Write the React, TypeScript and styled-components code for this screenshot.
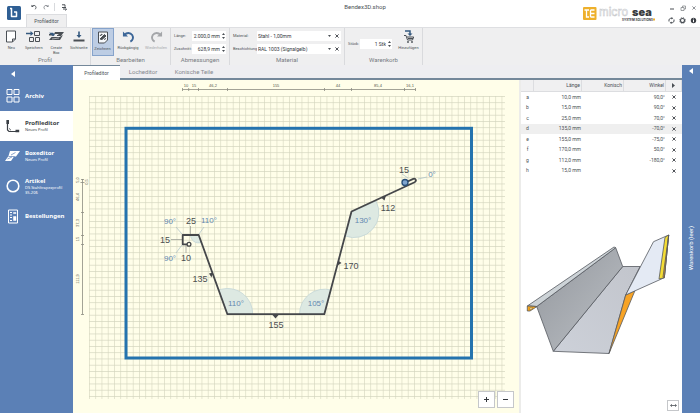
import React from "react";
import styled, { createGlobalStyle } from "styled-components";

const blue = "#5b80b6";
const ink = "#4a4f55";
const navy = "#35597f";

const GlobalStyle = createGlobalStyle`
  *, *::before, *::after { box-sizing: border-box; }
  body { margin: 0; background: #fff; color: ${ink}; font: 5px/6px Roboto, "Noto Sans", sans-serif; }
  button, input, select { font: inherit; color: inherit; margin: 0; padding: 0; border: 0; background: none; }
  svg { display: block; }
`;

const Page = styled.div`
  min-height: 100vh;
  display: flex;
  flex-direction: column;
`;

/* Title bar */
const TitleBar = styled.header`
  display: flex;
  height: 27px;
`;
const AppLogo = styled.div`
  width: 26px;
  padding: 6px 0 0 7px;
`;
const TitleLeft = styled.div`
  width: 121px;
  display: flex;
  flex-direction: column;
  justify-content: space-between;
`;
const QuickBar = styled.div`
  display: flex;
  align-items: center;
  gap: 5px;
  padding: 3px 0 0 4px;
`;
const QuickDivider = styled.span`
  width: 1px;
  height: 8px;
  background: #d8dadd;
`;
const IconButton = styled.button`
  display: grid;
  place-items: center;
  width: 7px;
  height: 7px;
`;
const RibbonTab = styled.button`
  width: 41px;
  height: 13px;
  background: #efeff0;
  border: 1px solid #dcdde0;
  border-bottom: 0;
  align-self: flex-start;
`;
const AppTitle = styled.h1`
  flex: 1;
  margin: 0;
  padding-top: 3px;
  text-align: center;
  font-size: 6px;
  line-height: 8px;
  font-weight: 400;
`;
const Brand = styled.div`
  width: 74px;
  padding-top: 6px;
`;
const WindowTools = styled.div`
  width: 43px;
  display: grid;
  grid-template-columns: repeat(3, 7px);
  column-gap: 4px;
  row-gap: 6px;
  align-content: start;
  justify-content: end;
  padding: 4px 3px 0 0;
`;

/* Ribbon */
const Ribbon = styled.div`
  display: flex;
  height: 38px;
  background: #efeff0;
  border-top: 1px solid #dedfe2;
`;
const Group = styled.section<{ $width: number }>`
  width: ${(p) => p.$width}px;
  display: flex;
  flex-direction: column;
  justify-content: space-between;
  border-right: 1px solid #d9dadd;
`;
const GroupBody = styled.div<{ $center?: boolean }>`
  display: flex;
  justify-content: space-around;
  align-items: ${(p) => (p.$center ? "center" : "flex-start")};
  height: 28px;
`;
const GroupLabel = styled.div`
  text-align: center;
  font-size: 6px;
  height: 9px;
  line-height: 8px;
  color: #777b82;
`;
const Tool = styled.button<{ $active?: boolean; $muted?: boolean; $wide?: boolean }>`
  width: ${(p) => (p.$wide ? 27 : 22)}px;
  height: 28px;
  display: flex;
  flex-direction: column;
  align-items: center;
  padding-top: 2px;
  gap: 2px;
  font-size: 4px;
  line-height: 5px;
  background: ${(p) => (p.$active ? "#bdcde4" : "transparent")};
  border: ${(p) => (p.$active ? "1px solid #86a3cb" : "0")};
  opacity: ${(p) => (p.$muted ? 0.45 : 1)};
`;
const Fields = styled.div`
  flex: 1;
  display: grid;
  align-content: start;
  gap: 3px;
  padding: 3px 3px 0;
`;
const FieldRow = styled.div`
  display: flex;
  align-items: center;
`;
const FieldLabel = styled.label<{ $width: number }>`
  width: ${(p) => p.$width}px;
  font-size: 4px;
  white-space: nowrap;
`;
const FieldBox = styled.div`
  flex: 1;
  height: 10px;
  min-width: 0;
  display: flex;
  align-items: center;
  gap: 2px;
  padding: 0 1px;
  background: #fff;
  color: #33373c;
`;
const NumberInput = styled.input`
  flex: 1;
  width: 0;
  min-width: 0;
  text-align: right;
`;
const Picker = styled.select`
  flex: 1;
  min-width: 0;
  appearance: none;
`;
const Spinner = styled.span`
  display: grid;
  gap: 2px;
`;
const SpinButton = styled.button`
  display: block;
  width: 3px;
  height: 2px;
`;

/* Main area */
const Main = styled.div`
  flex: 1;
  display: flex;
`;
const Sidebar = styled.nav`
  width: 73px;
  background: ${blue};
  color: #fff;
`;
const Collapse = styled.button`
  display: block;
  height: 16px;
  padding: 2px 0 0 11px;
`;
const NavItem = styled.button<{ $active?: boolean }>`
  width: 100%;
  height: 30px;
  display: flex;
  align-items: center;
  gap: 5px;
  padding-left: 5px;
  text-align: left;
  background: ${(p) => (p.$active ? "#fff" : "transparent")};
  color: ${(p) => (p.$active ? "#3b3f45" : "#fff")};
`;
const NavText = styled.span`
  display: flex;
  flex-direction: column;
  font-size: 4px;
  line-height: 5px;
  font-family: "Noto Sans", sans-serif;
  white-space: nowrap;
`;
const NavTitle = styled.strong`
  font-size: 6px;
  line-height: 7px;
`;
const Center = styled.div`
  flex: 1;
  min-width: 0;
  display: flex;
  flex-direction: column;
`;
const TabBar = styled.div`
  display: flex;
  height: 15px;
  background: #eeeef1;
  border-bottom: 2px solid #74889a;
`;
const Tab = styled.button<{ $active?: boolean; $width: number }>`
  width: ${(p) => p.$width}px;
  height: ${(p) => (p.$active ? 15 : 13)}px;
  font-size: ${(p) => (p.$active ? 5 : 6)}px;
  background: ${(p) => (p.$active ? "#fff" : "transparent")};
  border-top: ${(p) => (p.$active ? "1px solid #74889a" : "0")};
  color: ${(p) => (p.$active ? ink : "#85888d")};
`;
const Split = styled.div`
  flex: 1;
  display: flex;
`;
const Canvas = styled.div`
  flex: 1;
  min-width: 0;
  position: relative;
  background: #fffee9;
  border-right: 2px solid #ececea;
`;
const Drawing = styled.svg`
  width: 100%;
  height: auto;
  font-family: "Liberation Sans", Arial, sans-serif;
`;
const ZoomButtons = styled.div`
  position: absolute;
  right: 5px;
  bottom: 5px;
  display: flex;
  gap: 2px;
`;
const ZoomButton = styled.button`
  width: 17px;
  height: 17px;
  display: grid;
  place-items: center;
  background: #fff;
  border: 1px solid #c5c7ca;
`;
const SidePanel = styled.aside`
  width: 161px;
  display: flex;
  flex-direction: column;
  background: #fff;
`;
const Segments = styled.table`
  width: 100%;
  height: 96px;
  table-layout: fixed;
  border-collapse: separate;
  border-spacing: 0;
  line-height: 5px;
`;
const Head = styled.th<{ $width: number }>`
  width: ${(p) => p.$width}px;
  height: 12px;
  padding: 0 1px;
  font-weight: 400;
  text-align: right;
  background: #f0f0f1;
  border-right: 1px solid #dcdde0;
  border-bottom: 1px solid #dcdde0;
`;
const SegmentRow = styled.tr<{ $active?: boolean }>`
  background: ${(p) => (p.$active ? "#efefef" : "transparent")};
`;
const Cell = styled.td<{ $center?: boolean }>`
  padding: 0 1px;
  text-align: ${(p) => (p.$center ? "center" : "right")};
`;
const DeleteButton = styled.button`
  display: block;
  margin: 0 auto;
`;
const Preview = styled.div`
  flex: 1;
  display: flex;
  flex-direction: column;
  justify-content: space-between;
  padding: 56px 0 2px;
`;
const FitButton = styled.button`
  align-self: flex-end;
  width: 12px;
  height: 11px;
  margin-right: 3px;
  display: grid;
  place-items: center;
  border: 1px solid #c5c7ca;
`;
const CartStrip = styled.aside`
  width: 18px;
  background: ${blue};
  color: #fff;
  display: flex;
  flex-direction: column;
  align-items: center;
  gap: 152px;
`;
const StripToggle = styled.button`
  padding-top: 3px;
`;
const CartLabel = styled.span`
  writing-mode: vertical-rl;
  transform: rotate(180deg);
  font-size: 6px;
  line-height: 8px;
`;

const Undo = ({ size = 7, color = ink, flip = false, weight = 2 }) => (
  <svg width={size} height={size} viewBox="0 0 14 14" fill="none" stroke={color} strokeWidth={weight}>
    <g transform={flip ? "translate(14 0) scale(-1 1)" : undefined}>
      <path d="M2.500 5.500C5 2.500 9 2.500 11 5.500c1.600 2.600.8 5.300-2 7" />
      <path d="M1 1.500v5.500h5.500z" fill={color} stroke="none" />
    </g>
  </svg>
);
const Cross = () => (
  <svg width="4" height="4" viewBox="0 0 4 4" stroke="#3c4046" strokeWidth=".9">
    <path d="M.4.4l3.200 3.200M3.600.4L.4 3.600" />
  </svg>
);
const Triangle = ({ d, color = ink, w = 4, h = 3 }: { d: string; color?: string; w?: number; h?: number }) => (
  <svg width={w} height={h} viewBox={`0 0 ${w} ${h}`} fill={color}>
    <path d={d} />
  </svg>
);

const NewIcon = () => (
  <svg width="12" height="13" viewBox="0 0 12 13" fill="#fff" stroke={ink} strokeWidth="1">
    <path d="M1.500 1h9v8l-3 3h-6zM10.500 9h-3v3" />
  </svg>
);
const SaveIcon = () => (
  <svg width="15" height="13" viewBox="0 0 15 13" fill="none" stroke={ink} strokeWidth="1">
    <path d="M8.500 1.500h5v4h-5zM3.500 7.500h4v4h-4zM9.500 7.500h4v4h-4z" />
    <path d="M0 3.500h5" stroke={navy} strokeWidth="1.500" />
    <path d="M4.500 1l3 2.500-3 2.500z" fill={navy} stroke="none" />
  </svg>
);
const BoxIcon = () => (
  <svg width="15" height="13" viewBox="0 0 15 13" fill={ink}>
    <path d="M6 2h9l-3 4H8V5h2L8.500 4H5zM2.500 7h8L14 5l-3 5H0zM0 4h5v1.500H0z" />
    <path d="M0 2.800h4l2 1.900-2 1.500z" fill={navy} />
    <path d="M3 9l7-1" stroke="#efeff0" strokeWidth=".6" />
  </svg>
);
const SideIcon = () => (
  <svg width="12" height="13" viewBox="0 0 12 13" fill={navy}>
    <path d="M5.200 1.500h1.600V5h1.700L6 8 3.500 5h1.700z" />
    <path d="M.5 9.500h11v2H.5z" fill={ink} />
  </svg>
);
const DrawIcon = () => (
  <svg width="12" height="13" viewBox="0 0 12 13" fill="#f6f8fb" stroke={ink} strokeWidth="1">
    <path d="M1.500 1h9v8l-3 3h-6z" />
    <path d="M3 8l4.500-4.500 1.500 1.500L5 8.500zM3 5c1-2 2-2 2.500-1M7 8.500l2-1" fill={ink} />
  </svg>
);
const CartIcon = () => (
  <svg width="12" height="13" viewBox="0 0 12 13" fill="none" stroke={ink} strokeWidth="1">
    <path d="M2 1h5v3" stroke={navy} strokeWidth="1.500" />
    <path d="M4.500 3.500h5L7 6z" fill={navy} stroke="none" />
    <path d="M1 5.500h2l1.500 4.500h5l1.200-3H4M5 8.500h5" />
    <circle cx="5" cy="12" r=".6" />
    <circle cx="9" cy="12" r=".6" />
  </svg>
);

const ArchiveIcon = () => (
  <svg width="15" height="14" viewBox="0 0 15 14" fill="none" stroke="#fff" strokeWidth="1">
    <path d="M2 .5h5v5H2zM9 .5h5v5H9zM2 8h5v5H2zM9 8h5v5H9z" />
  </svg>
);
const ProfileIcon = () => (
  <svg width="15" height="14" viewBox="0 0 15 14" fill="none" stroke="#3b3f45">
    <path d="M2.500 1.500v9.500l1.500 1.500H14" strokeWidth="1.200" />
    <path d="M2.700 1v4M10.500 12h3.700" strokeWidth="2.600" />
    <path d="M4.200 9.500l1.600 1.600" strokeWidth="1" />
  </svg>
);
const TrayIcon = () => (
  <svg width="15" height="12" viewBox="0 0 15 12" fill="#fff">
    <path d="M5 1h10l-4 5.500H9L6 11H0l3.500-5z" />
    <path d="M3.500 6.500h6M6 5l4.500-2.500M2.500 9L7 7" stroke={blue} strokeWidth=".7" />
  </svg>
);
const RingIcon = () => (
  <svg width="15" height="14" viewBox="0 0 15 14" fill="none" stroke="#fff" strokeWidth="1.600">
    <circle cx="8" cy="7" r="5.800" />
  </svg>
);
const OrdersIcon = () => (
  <svg width="15" height="15" viewBox="0 0 15 15" fill="none" stroke="#fff" strokeWidth="1">
    <path d="M3.500 1h9v13h-9z" />
    <path d="M5 3.500h2M5 6h2M5 8.500h2M5 11.500h2" />
    <path d="M8.500 3.500h2.500v1H8.500zM8.500 7.500h2.500v4H8.500z" fill="#fff" strokeWidth=".5" />
  </svg>
);

const gray = { fontSize: 9, fill: "#4b4e50", textAnchor: "middle" as const };
const angle = { fontSize: 8, fill: "#6488b0", textAnchor: "middle" as const };
const dim = { fontSize: 4, fill: "#55574e", textAnchor: "middle" as const };

const lengths: [number, number, string][] = [
  [191, 224, "25"], [165, 243, "15"], [186, 261, "10"], [200, 282, "135"],
  [276, 328, "155"], [351, 269, "170"], [388, 211, "112"], [404, 173, "15"],
];
const angles: [number, number, string][] = [
  [170, 224, "90°"], [209, 223, "110°"], [170, 261, "90°"], [236, 306, "110°"],
  [316, 306, "105°"], [363, 223, "130°"], [432, 177, "0°"],
];
const topDims: [number, string][] = [
  [186, "10"], [194, "15"], [213, "46,2"], [276, "155"], [338, "44"], [378, "85,4"], [410, "16,1"],
];
const leftDims: [number, number, string][] = [
  [79, 180, "5,0"], [79, 197, "46,4"], [79, 223, "37,3"], [79, 239, "15"], [79, 279, "111,9"], [88, 182, "0,5"],
];

const ProfileDrawing = () => (
  <Drawing viewBox="73 80 446 333" role="img" aria-label="Profil">
    <defs>
      <pattern id="grid" x="89" y="96" width="6.250" height="6.250" patternUnits="userSpaceOnUse">
        <path d="M0 0H6.250M0 0V6.250" stroke="#d4d5be" strokeWidth="1.200" fill="none" />
      </pattern>
    </defs>
    <rect x="89" y="96" width="416" height="303" fill="url(#grid)" />
    <g stroke="#8b8c80" strokeWidth=".8" fill="none">
      <path d="M182.500 89.500H415.500M182.500 88v3M188.700 88v3M198.500 88v3M227.500 88v3M324.500 88v3M351.500 88v3M404.500 88v3M415.500 88v3" />
      <path d="M82.500 179V314.500M81 179.500h3M80.500 182.500h4M81 212.500h3M81 235.500h3M81 244.500h3M81 314.500h3" />
    </g>
    {topDims.map(([x, t]) => <text key={t} x={x} y={87} {...dim}>{t}</text>)}
    {leftDims.map(([x, y, t]) => (
      <text key={t} transform={`translate(${x} ${y}) rotate(-90)`} {...dim}>{t}</text>
    ))}
    <rect x="126" y="128.300" width="345.500" height="229.700" fill="none" stroke="#2473ae" strokeWidth="3" />
    <g fill="#dde9e2" stroke="#bfd3d6" strokeWidth=".7">
      <path d="M227.500 314L219 290A25 25 0 0 1 252.500 314z" />
      <path d="M324.500 314H299.500A25 25 0 0 1 331 290z" />
      <path d="M351.500 212L345 236A25 25 0 0 0 376 201z" />
      <path d="M198.500 235h-8a8 8 0 0 0 10.500 7.500z" />
    </g>
    <g stroke="#a9bec6" strokeWidth=".7" fill="none">
      <path d="M176 227l6 7M204 227l-5 7M176 253l6-8M418 179l9-2M402 174l6 4" />
      <path d="M190.500 226v8M171 239.500h11M186 253v-8" stroke="#94978f" />
    </g>
    <path
      d="M189 244.300H182.700V235H198.700L227.400 314.200H324.300L351.500 211.500L414.600 182.300C417 181 415.700 178 413.300 178.900L406 182.300"
      fill="none" stroke="#45474a" strokeWidth="1.800" strokeLinejoin="round"
    />
    <g fill="#45474a">
      <path d="M272.500 315h6l-3 3.500zM213 272.500l-1.500 5-2.500-4zM338 260.500l3.500 2.500-4 2.500zM381 197.500l5-2-1.500 5z" />
    </g>
    <circle cx="189" cy="244.300" r="1.900" fill="#fffee9" stroke="#45474a" strokeWidth="1.300" />
    <circle cx="405" cy="182.500" r="3" fill="#7fa5cf" stroke="#294f78" strokeWidth="1.300" />
    {lengths.map(([x, y, t]) => <text key={`${x}-${y}`} x={x} y={y} {...gray}>{t}</text>)}
    {angles.map(([x, y, t]) => <text key={`${x}-${y}`} x={x} y={y} {...angle}>{t}</text>)}
  </Drawing>
);

const Model3D = () => (
  <svg width="100%" viewBox="521 232 161 125" role="img" aria-label="3D">
    <defs>
      <linearGradient id="wall" x1="0" y1="0" x2="1" y2="1">
        <stop offset="0" stopColor="#93979d" />
        <stop offset="1" stopColor="#bcc0c5" />
      </linearGradient>
      <linearGradient id="floor" x1="0" y1="1" x2="1" y2="0">
        <stop offset="0" stopColor="#cdd1d9" />
        <stop offset="1" stopColor="#c2c5cc" />
      </linearGradient>
    </defs>
    <g stroke="#55595f" strokeWidth=".8" strokeLinejoin="round">
      <path d="M553.300 351.300L622.700 266.500H640L625.700 295L609 353.500z" fill="url(#floor)" />
      <path d="M536.700 306.500L615.700 247.700L622.700 266.500L553.300 351.300z" fill="url(#wall)" />
      <path d="M527.300 306L614 247L615.700 247.700L536.700 306.500L531 306z" fill="#cdd3d7" />
      <path d="M527.300 306L537 306.500L530 311H527.300z" fill="#f3a51e" />
      <path d="M530 307.500l3 .5-3 2z" fill="#fff1c9" stroke="#8b6420" strokeWidth=".5" />
      <path d="M625.700 295L635 290.500L609 353.500z" fill="#f7a325" />
      <path d="M625.700 295L653.500 241.700L668.700 235L664.300 277.700z" fill="#e4eaf4" />
      <path d="M665 237.300L668.700 235L664.300 277.700L659 279z" fill="#f5dd35" />
      <path d="M668.700 235L664.300 277.700L663 277z" fill="#f09a22" />
    </g>
  </svg>
);

const segments = [
  ["a", "10,0 mm", "90,0°"], ["b", "15,0 mm", "90,0°"], ["c", "25,0 mm", "70,0°"],
  ["d", "135,0 mm", "-70,0°"], ["e", "155,0 mm", "-75,0°"], ["f", "170,0 mm", "50,0°"],
  ["g", "112,0 mm", "-180,0°"], ["h", "15,0 mm", ""],
];

const NumberField = ({ id, label, width, value }: { id: string; label: string; width: number; value: string }) => (
  <FieldRow>
    <FieldLabel htmlFor={id} $width={width}>{label}</FieldLabel>
    <FieldBox>
      <NumberInput id={id} defaultValue={value} />
      <Spinner>
        <SpinButton aria-label={`${label} mehr`}><Triangle d="M0 2L1.500 0L3 2z" w={3} h={2} /></SpinButton>
        <SpinButton aria-label={`${label} weniger`}><Triangle d="M0 0L1.500 2L3 0z" w={3} h={2} /></SpinButton>
      </Spinner>
    </FieldBox>
  </FieldRow>
);
const SelectField = ({ id, label, value }: { id: string; label: string; value: string }) => (
  <FieldRow>
    <FieldLabel htmlFor={id} $width={24}>{label}</FieldLabel>
    <FieldBox>
      <Picker id={id}><option>{value}</option></Picker>
      <Triangle d="M0 0h3L1.500 2z" w={3} h={2} />
      <IconButton aria-label={`${label} löschen`}><Cross /></IconButton>
    </FieldBox>
  </FieldRow>
);

export default function App() {
  return (
    <Page>
      <GlobalStyle />
      <TitleBar>
        <AppLogo>
          <svg width="14" height="14" viewBox="0 0 14 14">
            <rect width="14" height="14" rx="1.500" fill="#2f5f94" />
            <path d="M3 2.500H4.500V10.500H9.500V6H7" fill="none" stroke="#fff" strokeWidth="1.500" strokeLinejoin="round" />
          </svg>
        </AppLogo>
        <TitleLeft>
          <QuickBar>
            <IconButton aria-label="Rückgängig"><Undo size={6} /></IconButton>
            <IconButton aria-label="Wiederholen"><Undo size={6} flip color="#83878c" /></IconButton>
            <QuickDivider />
            <IconButton aria-label="Warenkorb">
              <svg width="6" height="7" viewBox="0 0 6 7" fill="none" stroke={ink} strokeWidth="1">
                <path d="M1 .8h3v2M1 3.500h4M2 5h3.500L4.500 6.500" />
              </svg>
            </IconButton>
          </QuickBar>
          <RibbonTab>Profileditor</RibbonTab>
        </TitleLeft>
        <AppTitle>Bendex3D.shop</AppTitle>
        <Brand>
          <svg width="74" height="18" viewBox="0 0 74 18" role="img" aria-label="microsea" fontFamily="Inter, sans-serif">
            <rect x="0" y="1" width="13.500" height="13" rx="1" fill="#eeb02b" />
            <path d="M1.500 4H6M3.500 4V11H6M7.500 4H11.500M7.500 7.500H11.500M7.500 11H11.500M7.500 4v7" stroke="#fff" strokeWidth="1.300" fill="none" />
            <text x="16" y="10" fontSize="11" fill="none" stroke="#c3c5c8" strokeWidth=".5">micro</text>
            <text x="49" y="10" fontSize="11" fontWeight="900" fill="#3a3b3d">sea</text>
            <text x="39" y="15" fontSize="3" fontWeight="700" fill="#3a3b3d">SYSTEM SOLUTIONS</text>
            <rect x="70" y="12.500" width="2" height="2" fill="#eeb02b" />
          </svg>
        </Brand>
        <WindowTools>
          <IconButton aria-label="Minimieren">
            <svg width="6" height="6" viewBox="0 0 6 6"><path d="M1 4h4" stroke={ink} /></svg>
          </IconButton>
          <IconButton aria-label="Verkleinern">
            <svg width="6" height="6" viewBox="0 0 6 6" fill="none" stroke="#777b80" strokeWidth=".7"><path d="M1 2.500h3v3H1zM2.500 2.500V1h3v3H4" /></svg>
          </IconButton>
          <IconButton aria-label="Schließen">
            <svg width="4" height="4" viewBox="0 0 4 4" stroke="#777b80" strokeWidth=".8"><path d="M.4.4l3.200 3.200M3.600.4L.4 3.600" /></svg>
          </IconButton>
          <IconButton aria-label="Aktualisieren">
            <svg width="7" height="7" viewBox="0 0 7 7" fill="none" stroke={ink} strokeWidth="1">
              <path d="M1 4.500C.5 2 2 1 4 1.300M6 2.500C6.500 5 5 6 3 5.700" />
              <path d="M3.500 0v2.600L5.300 1.300zM3.500 7V4.400L1.700 5.700z" fill={ink} stroke="none" />
            </svg>
          </IconButton>
          <IconButton aria-label="Einstellungen">
            <svg width="7" height="7" viewBox="0 0 7 7" fill="none" stroke={ink}>
              <circle cx="3.500" cy="3.500" r="2" strokeWidth="1.100" />
              <circle cx="3.500" cy="3.500" r="2.900" strokeWidth=".8" strokeDasharray="1.200 1.080" />
            </svg>
          </IconButton>
          <IconButton aria-label="Info">
            <svg width="7" height="7" viewBox="0 0 7 7">
              <circle cx="3.500" cy="3.500" r="2.700" fill="#3c4046" />
              <path d="M3.500 1.600v.8M3.500 3v2.200" stroke="#fff" strokeWidth="1" />
            </svg>
          </IconButton>
        </WindowTools>
      </TitleBar>

      <Ribbon>
        <Group $width={91}>
          <GroupBody>
            <Tool><NewIcon />Neu</Tool>
            <Tool><SaveIcon />Speichern</Tool>
            <Tool><BoxIcon /><span>Create<br />Box</span></Tool>
            <Tool><SideIcon />Sichtseite</Tool>
          </GroupBody>
          <GroupLabel>Profil</GroupLabel>
        </Group>
        <Group $width={80}>
          <GroupBody>
            <Tool $active><DrawIcon />Zeichnen</Tool>
            <Tool $wide><Undo size={13} color="#3c6698" />Rückgängig</Tool>
            <Tool $wide $muted><Undo size={13} flip />Wiederholen</Tool>
          </GroupBody>
          <GroupLabel>Bearbeiten</GroupLabel>
        </Group>
        <Group $width={59}>
          <Fields>
            <NumberField id="laenge" label="Länge:" width={18} value="2.000,0 mm" />
            <NumberField id="zuschnitt" label="Zuschnitt:" width={18} value="628,9 mm" />
          </Fields>
          <GroupLabel>Abmessungen</GroupLabel>
        </Group>
        <Group $width={115}>
          <Fields>
            <SelectField id="material" label="Material:" value="Stahl - 1,00mm" />
            <SelectField id="beschichtung" label="Beschichtung:" value="RAL 1003 (Signalgelb)" />
          </Fields>
          <GroupLabel>Material</GroupLabel>
        </Group>
        <Group $width={78}>
          <GroupBody $center>
            <Fields><NumberField id="stueck" label="Stück:" width={12} value="1 Stk" /></Fields>
            <Tool $wide><CartIcon />Hinzufügen</Tool>
          </GroupBody>
          <GroupLabel>Warenkorb</GroupLabel>
        </Group>
      </Ribbon>

      <Main>
        <Sidebar>
          <Collapse aria-label="Einklappen"><Triangle d="M4 0v6L0 3z" color="#fff" w={4} h={6} /></Collapse>
          <NavItem><ArchiveIcon /><NavText><NavTitle>Archiv</NavTitle></NavText></NavItem>
          <NavItem $active><ProfileIcon /><NavText><NavTitle>Profileditor</NavTitle>Neues Profil</NavText></NavItem>
          <NavItem><TrayIcon /><NavText><NavTitle>Boxeditor</NavTitle>Neues Profil</NavText></NavItem>
          <NavItem><RingIcon /><NavText><NavTitle>Artikel</NavTitle><span>DS Stahltrapezprofil</span><span>35-206</span></NavText></NavItem>
          <NavItem><OrdersIcon /><NavText><NavTitle>Bestellungen</NavTitle></NavText></NavItem>
        </Sidebar>
        <Center>
          <TabBar>
            <Tab $active $width={47}>Profileditor</Tab>
            <Tab $width={46}>Locheditor</Tab>
            <Tab $width={56}>Konische Teile</Tab>
          </TabBar>
          <Split>
            <Canvas>
              <ProfileDrawing />
              <ZoomButtons>
                <ZoomButton aria-label="Vergrößern"><svg width="5" height="5" viewBox="0 0 5 5" stroke="#33373c"><path d="M0 2.500h5M2.500 0v5" /></svg></ZoomButton>
                <ZoomButton aria-label="Verkleinern"><svg width="5" height="5" viewBox="0 0 5 5" stroke="#33373c"><path d="M0 2.500h5" /></svg></ZoomButton>
              </ZoomButtons>
            </Canvas>
            <SidePanel>
              <Segments>
                <thead>
                  <tr>
                    <Head $width={13} aria-label="Segment" />
                    <Head $width={48}>Länge</Head>
                    <Head $width={42}>Konisch</Head>
                    <Head $width={42}>Winkel</Head>
                    <Head $width={16}><DeleteButton aria-label="Weiter"><Triangle d="M0 0L3 2.500L0 5z" w={3} h={5} /></DeleteButton></Head>
                  </tr>
                </thead>
                <tbody>
                  {segments.map(([name, length, bend]) => (
                    <SegmentRow key={name} $active={name === "d"}>
                      <Cell $center>{name}</Cell>
                      <Cell>{length}</Cell>
                      <Cell />
                      <Cell>{bend}</Cell>
                      <Cell><DeleteButton aria-label={`${name} löschen`}><Cross /></DeleteButton></Cell>
                    </SegmentRow>
                  ))}
                </tbody>
              </Segments>
              <Preview>
                <Model3D />
                <FitButton aria-label="Einpassen">
                  <svg width="7" height="3" viewBox="0 0 7 3" stroke={ink} strokeWidth=".8" fill="none"><path d="M2 .3L.6 1.500L2 2.700M5 .3L6.400 1.500L5 2.700M.6 1.500h5.800" /></svg>
                </FitButton>
              </Preview>
            </SidePanel>
          </Split>
        </Center>
        <CartStrip>
          <StripToggle aria-label="Warenkorb öffnen"><Triangle d="M4 0v6L0 3z" color="#fff" w={4} h={6} /></StripToggle>
          <CartLabel>Warenkorb (leer)</CartLabel>
        </CartStrip>
      </Main>
    </Page>
  );
}
